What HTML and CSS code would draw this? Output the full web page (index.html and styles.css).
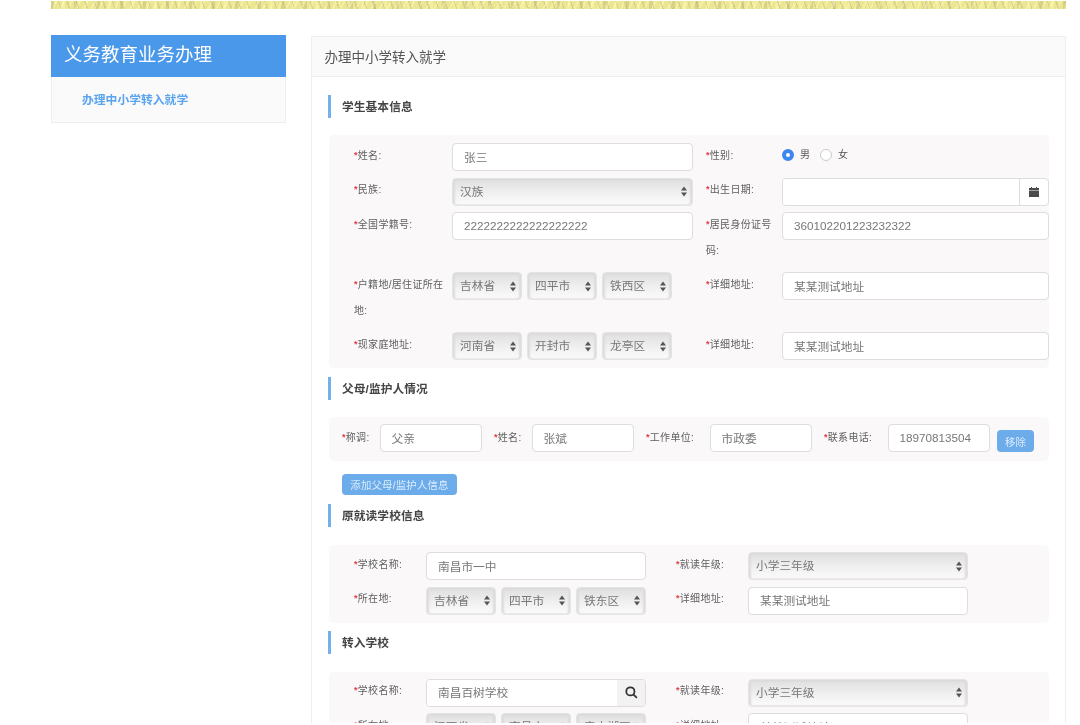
FILE: index.html
```html
<!DOCTYPE html>
<html lang="zh-CN">
<head>
<meta charset="utf-8">
<title>办理中小学转入就学</title>
<link rel="stylesheet" href="styles.css">
</head>
<body>
<div class="page">
  <div class="band"></div>
  <main class="layout">
    <aside class="side">
      <h2 class="side-title">义务教育业务办理</h2>
      <div class="side-body"><a class="side-link">办理中小学转入就学</a></div>
    </aside>
    <section class="panel">
      <header class="panel-head">办理中小学转入就学</header>
      <div class="panel-body">
        <h3 class="sec sec-first">学生基本信息</h3>
        <div class="block grid-a">
          <label class="lab"><i>*</i>姓名:</label>
          <input class="input" value="张三">
          <label class="lab"><i>*</i>性别:</label>
          <div class="radios">
            <input type="radio" class="radio" name="g" checked><span class="radio-text">男</span>
            <input type="radio" class="radio" name="g"><span class="radio-text">女</span>
          </div>

          <label class="lab"><i>*</i>民族:</label>
          <div class="select"><span>汉族</span><svg class="arrows" viewBox="0 0 6 10"><path d="M3 0 6 4H0zM3 10 0 6h6z"/></svg></div>
          <label class="lab"><i>*</i>出生日期:</label>
          <div class="group">
            <input class="input">
            <span class="addon"><svg class="ico-cal" viewBox="0 0 10 10"><path d="M2 0h1v1h4V0h1v1h2v2H0V1h2zM0 3.6h10V10H0z"/></svg></span>
          </div>

          <label class="lab"><i>*</i>全国学籍号:</label>
          <input class="input" value="2222222222222222222">
          <label class="lab"><i>*</i>居民身份证号码:</label>
          <input class="input" value="360102201223232322">

          <label class="lab"><i>*</i>户籍地/居住证所在地:</label>
          <div class="selects">
            <div class="select"><span>吉林省</span><svg class="arrows" viewBox="0 0 6 10"><path d="M3 0 6 4H0zM3 10 0 6h6z"/></svg></div>
            <div class="select"><span>四平市</span><svg class="arrows" viewBox="0 0 6 10"><path d="M3 0 6 4H0zM3 10 0 6h6z"/></svg></div>
            <div class="select"><span>铁西区</span><svg class="arrows" viewBox="0 0 6 10"><path d="M3 0 6 4H0zM3 10 0 6h6z"/></svg></div>
          </div>
          <label class="lab"><i>*</i>详细地址:</label>
          <input class="input" value="某某测试地址">

          <label class="lab"><i>*</i>现家庭地址:</label>
          <div class="selects">
            <div class="select"><span>河南省</span><svg class="arrows" viewBox="0 0 6 10"><path d="M3 0 6 4H0zM3 10 0 6h6z"/></svg></div>
            <div class="select"><span>开封市</span><svg class="arrows" viewBox="0 0 6 10"><path d="M3 0 6 4H0zM3 10 0 6h6z"/></svg></div>
            <div class="select"><span>龙亭区</span><svg class="arrows" viewBox="0 0 6 10"><path d="M3 0 6 4H0zM3 10 0 6h6z"/></svg></div>
          </div>
          <label class="lab"><i>*</i>详细地址:</label>
          <input class="input" value="某某测试地址">
        </div>

        <h3 class="sec">父母/监护人情况</h3>
        <div class="block parents">
          <label class="lab lab-s"><i>*</i>称调:</label>
          <input class="input input-p" value="父亲">
          <label class="lab lab-s"><i>*</i>姓名:</label>
          <input class="input input-p" value="张斌">
          <label class="lab lab-l"><i>*</i>工作单位:</label>
          <input class="input input-p" value="市政委">
          <label class="lab lab-l"><i>*</i>联系电话:</label>
          <input class="input input-p" value="18970813504">
          <button class="btn btn-remove">移除</button>
        </div>
        <button class="btn btn-add">添加父母/监护人信息</button>

        <h3 class="sec">原就读学校信息</h3>
        <div class="block grid-b">
          <label class="lab"><i>*</i>学校名称:</label>
          <input class="input" value="南昌市一中">
          <label class="lab"><i>*</i>就读年级:</label>
          <div class="select"><span>小学三年级</span><svg class="arrows" viewBox="0 0 6 10"><path d="M3 0 6 4H0zM3 10 0 6h6z"/></svg></div>

          <label class="lab"><i>*</i>所在地:</label>
          <div class="selects">
            <div class="select"><span>吉林省</span><svg class="arrows" viewBox="0 0 6 10"><path d="M3 0 6 4H0zM3 10 0 6h6z"/></svg></div>
            <div class="select"><span>四平市</span><svg class="arrows" viewBox="0 0 6 10"><path d="M3 0 6 4H0zM3 10 0 6h6z"/></svg></div>
            <div class="select"><span>铁东区</span><svg class="arrows" viewBox="0 0 6 10"><path d="M3 0 6 4H0zM3 10 0 6h6z"/></svg></div>
          </div>
          <label class="lab"><i>*</i>详细地址:</label>
          <input class="input" value="某某测试地址">
        </div>

        <h3 class="sec sec-tight">转入学校</h3>
        <div class="block grid-b">
          <label class="lab"><i>*</i>学校名称:</label>
          <div class="group">
            <input class="input" value="南昌百树学校">
            <span class="addon addon-search"><svg class="ico-search" viewBox="0 0 14 14"><circle cx="5.8" cy="5.8" r="4.4"/><path d="M9 9l3.8 3.8"/></svg></span>
          </div>
          <label class="lab"><i>*</i>就读年级:</label>
          <div class="select"><span>小学三年级</span><svg class="arrows" viewBox="0 0 6 10"><path d="M3 0 6 4H0zM3 10 0 6h6z"/></svg></div>

          <label class="lab"><i>*</i>所在地:</label>
          <div class="selects">
            <div class="select"><span>江西省</span><svg class="arrows" viewBox="0 0 6 10"><path d="M3 0 6 4H0zM3 10 0 6h6z"/></svg></div>
            <div class="select"><span>南昌市</span><svg class="arrows" viewBox="0 0 6 10"><path d="M3 0 6 4H0zM3 10 0 6h6z"/></svg></div>
            <div class="select"><span>青山湖区</span><svg class="arrows" viewBox="0 0 6 10"><path d="M3 0 6 4H0zM3 10 0 6h6z"/></svg></div>
          </div>
          <label class="lab"><i>*</i>详细地址:</label>
          <input class="input" value="某某测试地址">
        </div>
      </div>
    </section>
  </main>
</div>
</body>
</html>
```
FILE: styles.css
```css
* { box-sizing: border-box; }
html, body { margin: 0; height: 725px; overflow: hidden; background: #fff; }
body {
  font-family: "Liberation Sans", "Noto Sans CJK SC", sans-serif;
  color: #666;
}
.page { height: 723px; overflow: hidden; padding: 1px 14px 0 51px; filter: blur(0.55px); }

.band {
  height: 8px;
  background-color: #ece690;
  background-image:
    repeating-linear-gradient(71deg, rgba(170,155,100,.3) 0 1.5px, transparent 1.5px 9px, rgba(130,125,100,.22) 9px 10px, transparent 10px 17px),
    repeating-linear-gradient(-64deg, rgba(255,255,220,.35) 0 2px, transparent 2px 7px),
    repeating-linear-gradient(90deg, rgba(140,130,90,.2) 0 3px, transparent 3px 11px, rgba(255,250,170,.4) 11px 14px, transparent 14px 23px);
}

.layout { display: flex; gap: 25px; align-items: flex-start; margin-top: 26px; }

.side { width: 235px; flex: none; }
.side-title {
  margin: 0; height: 42px; padding-left: 13px;
  background: #4a98ea; color: #fff;
  font-size: 18.5px; font-weight: 400; line-height: 39px;
}
.side-body {
  height: 46px; padding: 15px 0 0 30px;
  background: #fafafa;
  border: 1px solid #eee; border-top: 0;
}
.side-link { font-size: 11.8px; font-weight: 700; line-height: 17px; color: #5ba5ef; display: block; }

.panel { width: 755px; flex: none; height: 720px; border: 1px solid #eee; border-bottom: 0; margin-top: 1px; }
.panel-head {
  height: 40px; padding: 1px 0 0 12.5px;
  background: #fafafa; border-bottom: 1px solid #eee;
  font-size: 13.5px; line-height: 39px; color: #555;
}
.panel-body { padding: 0 16px; }

.sec {
  margin: 9px 0 17px;
  height: 23px; padding-left: 11px;
  border-left: 3px solid #74b0ea;
  font-size: 11.7px; font-weight: 700; line-height: 23px; letter-spacing: .1px; color: #444;
}
.sec-first { margin-top: 18px; }
.sec-tight { margin-top: 8px; margin-bottom: 18px; }

.block { background: #faf8f9; border-radius: 5px; margin-left: 1px; width: 720px; }

.grid-a {
  display: grid;
  grid-template-columns: 98px 241px 89px 267px;
  row-gap: 6.5px;
  padding: 8px 0 8px 25px;
}
.grid-a > .lab:nth-child(4n+3) { margin-left: 13px; width: 72px; }
.grid-b {
  display: grid;
  grid-template-columns: 72px 220px 102px 220px;
  row-gap: 6.5px;
  padding: 7px 0 8px 25px;
}
.grid-b > .lab:nth-child(4n+3) { margin-left: 30px; white-space: nowrap; }

.lab {
  display: block;
  font-size: 10px; line-height: 26px; letter-spacing: .3px; color: #606060;
  margin: -0.5px 0 2px;
  padding-right: 3px;
}
.lab i { color: #e4393c; font-style: normal; font-weight: 700; font-size: 9px; line-height: 0; vertical-align: 1px; }

.input {
  display: block; width: 100%; height: 28px; margin: 0;
  padding: 0 11px 2px;
  background: #fff; border: 1px solid #ddd; border-radius: 4px;
  font: 11.7px "Liberation Sans", "Noto Sans CJK SC", sans-serif; color: #777;
  outline: none;
}

.select {
  display: flex; align-items: center; justify-content: space-between;
  height: 28px; flex: 1 1 0; min-width: 0;
  padding: 0 5.5px 3px 7px;
  border: 1px solid #e4e4e4; border-radius: 4px;
  background: linear-gradient(#dfdfdf, #f0f0f0 55%, #fbfbfb);
  box-shadow: inset 0 1px 2px #dadada, inset 2px 0 2px #dedede, inset -2px 0 2px #dedede;
  font-size: 11.7px; color: #777;
}
.select span { white-space: nowrap; overflow: hidden; }
.arrows { width: 6px; height: 11px; flex: none; fill: #555; margin-top: 3px; }

.selects { display: flex; gap: 5px; }
.grid-a .selects { width: 220px; }

.radios { display: flex; align-items: center; height: 24px; }
.radio {
  appearance: none; -webkit-appearance: none;
  width: 12px; height: 12px; margin: 0; flex: none;
  border-radius: 50%; background: #fff; border: 1px solid #ccc;
}
.radio:checked { border: 4px solid #3d86ef; }
.radio-text { font-size: 10px; line-height: 24px; margin: 0 10px 0 6px; color: #555; }

.group { display: flex; min-width: 0; border: 1px solid #ddd; border-radius: 4px; background: #fff; height: 28px; overflow: hidden; }
.group .input { border: 0; height: 26px; flex: 1; min-width: 0; border-radius: 0; }
.addon { flex: none; width: 29px; display: flex; align-items: center; justify-content: center; border-left: 1px solid #ddd; }
.addon-search { background: #f2f2f2; border-left: 0; width: 28px; }
.ico-cal { width: 10px; height: 10px; fill: #4a4a4a; }
.ico-search { width: 13px; height: 13px; fill: none; stroke: #333; stroke-width: 1.9; }

.parents { display: flex; align-items: flex-start; gap: 12.5px; height: 44px; padding: 7px 0 0 13px; }
.parents .lab { flex: none; margin: 1px -12.5px 0 0; padding: 0; white-space: nowrap; }
.lab-s { width: 37.5px; }
.lab-l { width: 63.5px; }
.input-p { width: 102px; flex: none; }

.btn {
  display: block; border: 0; border-radius: 4px; margin: 0; padding: 0;
  background: #6cacea; color: #dcebfb;
  font: 10.4px "Liberation Sans", "Noto Sans CJK SC", sans-serif;
}
.btn-remove { width: 37px; height: 22px; margin: 6px 0 0 -5px; flex: none; }
.btn-add { width: 115px; height: 21px; margin: 13px 0 0 14px; letter-spacing: .2px; }
.btn-add + .sec { margin-top: 9px; margin-bottom: 18px; }
```
